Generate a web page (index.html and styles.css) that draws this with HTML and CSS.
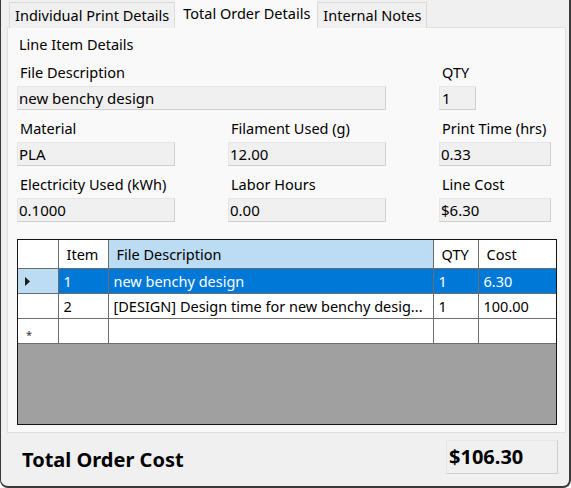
FILE: index.html
```html
<!DOCTYPE html>
<html>
<head>
<meta charset="utf-8">
<link rel="stylesheet" href="styles.css">
</head>
<body>
<div class="window">
  <div class="tabs">
    <div class="tab">Individual Print Details</div>
    <div class="tab active">Total Order Details</div>
    <div class="tab">Internal Notes</div>
  </div>
  <div class="panel">
    <div class="group-title">Line Item Details</div>
    <div class="fields">
      <div class="field span2">
        <div class="label">File Description</div>
        <div class="input wide">new benchy design</div>
      </div>
      <div class="field">
        <div class="label">QTY</div>
        <div class="input qty">1</div>
      </div>
      <div class="field">
        <div class="label">Material</div>
        <div class="input">PLA</div>
      </div>
      <div class="field">
        <div class="label">Filament Used (g)</div>
        <div class="input">12.00</div>
      </div>
      <div class="field">
        <div class="label">Print Time (hrs)</div>
        <div class="input small">0.33</div>
      </div>
      <div class="field">
        <div class="label">Electricity Used (kWh)</div>
        <div class="input">0.1000</div>
      </div>
      <div class="field">
        <div class="label">Labor Hours</div>
        <div class="input">0.00</div>
      </div>
      <div class="field">
        <div class="label">Line Cost</div>
        <div class="input small">$6.30</div>
      </div>
    </div>
    <div class="grid">
      <table>
        <colgroup>
          <col class="c-rh"><col class="c-item"><col class="c-desc"><col class="c-qty"><col class="c-cost">
        </colgroup>
        <thead>
          <tr>
            <th class="rh"></th>
            <th>Item</th>
            <th class="sel-col">File Description</th>
            <th>QTY</th>
            <th>Cost</th>
          </tr>
        </thead>
        <tbody>
          <tr class="selected">
            <td class="rh rh-sel"><svg width="6" height="9" viewBox="0 0 6 9"><path d="M0 0 L5 4.5 L0 9 Z" fill="#1a1a1a"/></svg></td>
            <td>1</td>
            <td>new benchy design</td>
            <td>1</td>
            <td>6.30</td>
          </tr>
          <tr>
            <td class="rh"></td>
            <td>2</td>
            <td class="clip">[DESIGN] Design time for new benchy desig...</td>
            <td>1</td>
            <td>100.00</td>
          </tr>
          <tr class="newrow">
            <td class="rh"><span class="star">*</span></td>
            <td></td>
            <td></td>
            <td></td>
            <td></td>
          </tr>
        </tbody>
      </table>
      <div class="grid-empty"></div>
    </div>
  </div>
  <div class="footer">
    <div class="total-label">Total Order Cost</div>
    <div class="total-box">$106.30</div>
  </div>
</div>
</body>
</html>
```
FILE: styles.css
```css
html, body {
  margin: 0;
  padding: 0;
  background: #ffffff;
}
body {
  font-family: "Noto Sans", "Open Sans", sans-serif;
  font-size: 14.5px;
  color: #000;
}
.window {
  width: 571px;
  height: 488px;
  box-sizing: border-box;
  background: #f0f0f0;
  border-left: 1px solid #3a3a3a;
  border-right: 2px solid #3a3a3a;
  border-bottom: 2px solid #3a3a3a;
  border-bottom-left-radius: 8px;
  border-bottom-right-radius: 8px;
  padding: 0 3px 0 6px;
  display: flex;
  flex-direction: column;
}
.tabs {
  display: flex;
  align-items: flex-end;
  height: 28px;
  padding-left: 2px;
  position: relative;
  z-index: 1;
  margin-bottom: -1px;
}
.tab {
  height: 26px;
  box-sizing: border-box;
  border: 1px solid #dadada;
  border-bottom: none;
  background: #f0f0f0;
  padding: 0 5px;
  line-height: 25px;
  font-size: 14.5px;
  white-space: nowrap;
}
.tab.active {
  height: 28px;
  background: #f9f9f9;
  border-color: #f9f9f9;
  line-height: 24px;
  padding: 0 6px 0 7px;
}
.panel {
  height: 406px;
  box-sizing: border-box;
  border: 1px solid #e0e0e0;
  background: #f9f9f9;
  padding: 6px 0 0 9px;
  display: flex;
  flex-direction: column;
}
.group-title {
  line-height: 20px;
  height: 20px;
  padding-left: 2px;
  font-size: 14.5px;
}
.fields {
  margin-top: 8px;
  display: grid;
  grid-template-columns: 211px 211px 130px;
  row-gap: 8px;
}
.field.span2 {
  grid-column: span 2;
}
.label {
  height: 20px;
  line-height: 20px;
  padding-left: 3px;
  font-size: 14.5px;
  margin-bottom: 4px;
}
.input {
  width: 158px;
  height: 24px;
  box-sizing: border-box;
  background: #f0f0f0;
  border: 1px solid #e6e6e6;
  border-right-color: #cfcfcf;
  border-bottom-color: #cfcfcf;
  line-height: 23px;
  padding-left: 1px;
  font-size: 15px;
  white-space: nowrap;
}
.input.wide { width: 369px; }
.input.qty { width: 37px; padding-left: 2px; }
.input.small { width: 112px; }
.grid {
  margin-top: 17px;
  width: 540px;
  height: 186px;
  box-sizing: border-box;
  border: 1px solid #141414;
  background: #a0a0a0;
  display: flex;
  flex-direction: column;
}
table {
  border-collapse: collapse;
  table-layout: fixed;
  width: 538px;
  background: #ffffff;
}
col.c-rh { width: 40px; }
col.c-item { width: 50px; }
col.c-desc { width: 325px; }
col.c-qty { width: 45px; }
col.c-cost { width: 78px; }
th, td {
  border: 1px solid #6c6c6c;
  text-align: left;
  font-weight: normal;
  white-space: nowrap;
  overflow: hidden;
  padding: 0 0 0 5px;
  font-size: 14.5px;
}
tr > :first-child { border-left: none; }
tr > :last-child { border-right: none; }
thead th {
  border-top: none;
  height: 28px;
  padding-left: 8px;
  background: #ffffff;
}
thead th.sel-col { background: #bcdcf4; }
tbody td { height: 24px; }
tr.selected td {
  background: #0078d7;
  color: #ffffff;
}
tr.selected td.rh-sel {
  background: #bcdcf4;
  padding-left: 7px;
}
td.rh-sel svg { display: block; }
.star {
  font-size: 11px;
  color: #333;
  padding-left: 3px;
  position: relative;
  top: 2px;
}
.grid-empty { flex: 1; }
.footer {
  flex: 1;
  display: flex;
  align-items: center;
  justify-content: space-between;
  padding: 0 8px 0 15px;
}
.total-label {
  font-weight: bold;
  font-size: 20px;
  margin-top: 0;
}
.total-box {
  width: 112px;
  height: 34px;
  box-sizing: border-box;
  background: #f0f0f0;
  border: 1px solid #e6e6e6;
  border-right-color: #cfcfcf;
  border-bottom-color: #cfcfcf;
  font-weight: bold;
  font-size: 20px;
  line-height: 32px;
  padding-left: 2px;
  margin-top: -5px;
}
```
